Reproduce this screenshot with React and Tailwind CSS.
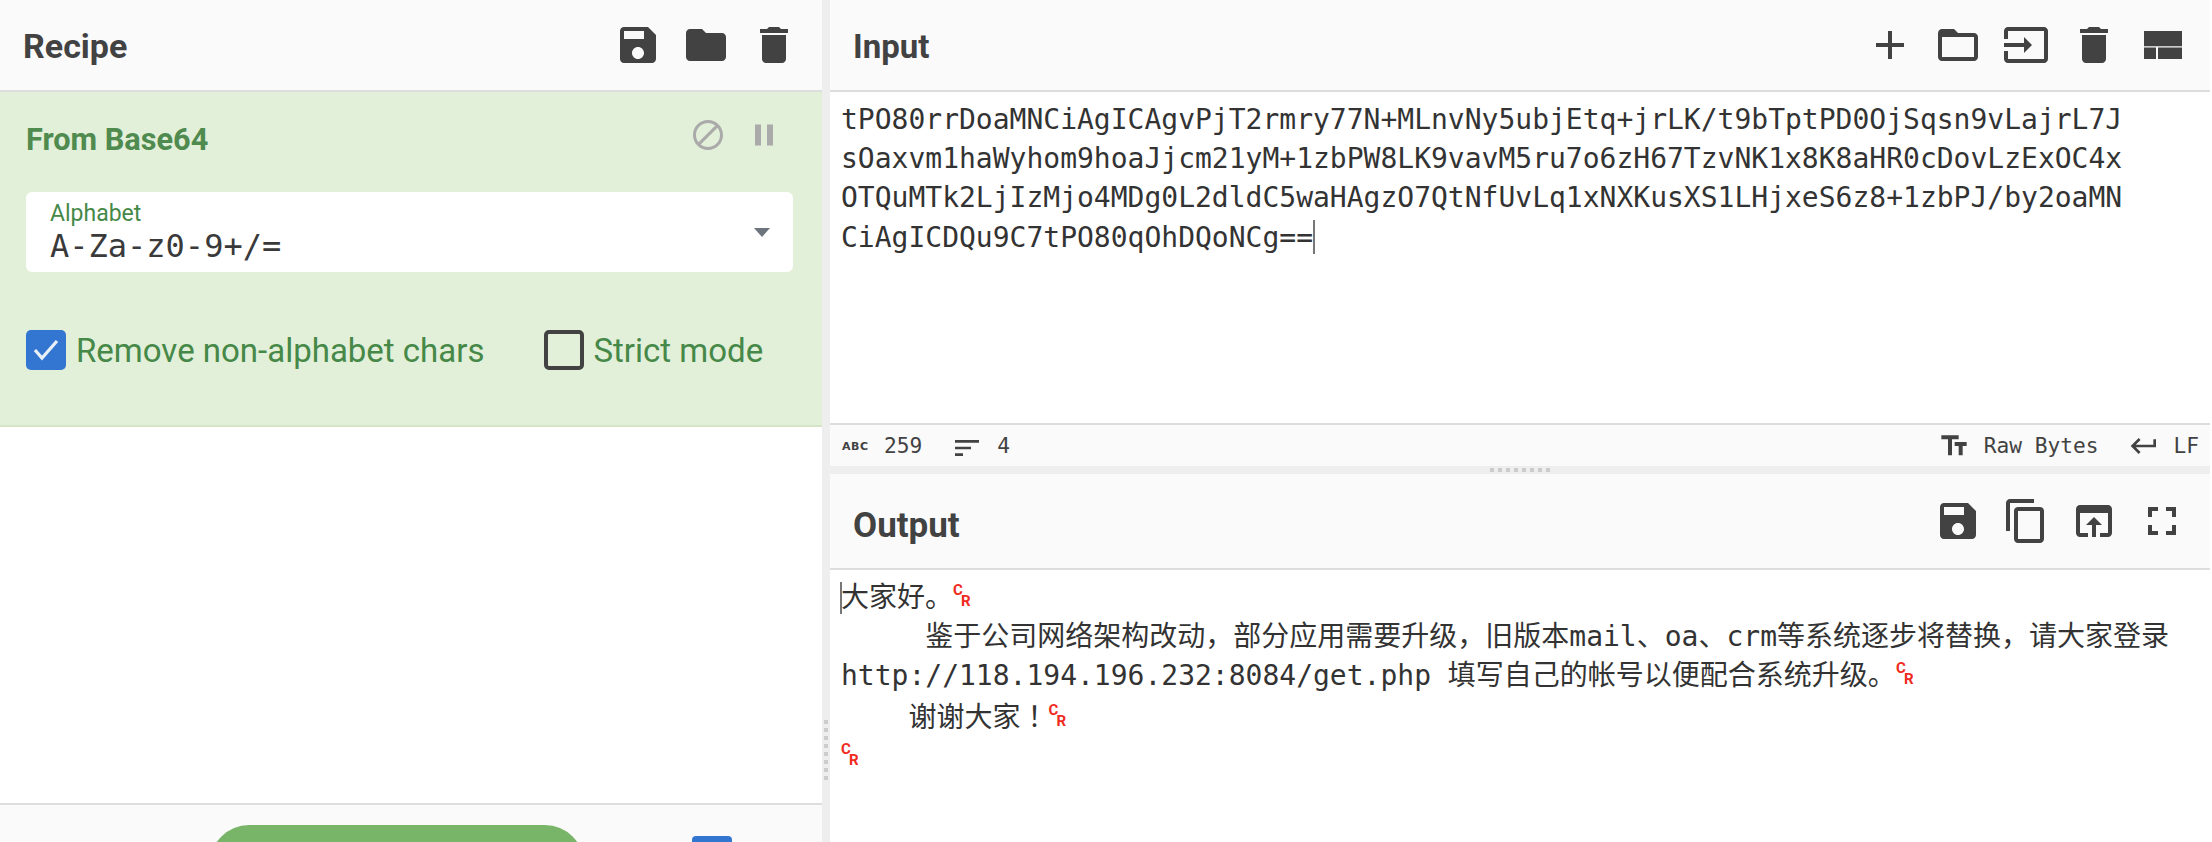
const P = {
  save: "M17 3H5c-1.11 0-2 .9-2 2v14c0 1.1.89 2 2 2h14c1.1 0 2-.9 2-2V7l-4-4zm-5 16c-1.66 0-3-1.34-3-3s1.34-3 3-3 3 1.34 3 3-1.34 3-3 3zm3-10H5V5h10v4z",
  folder: "M10 4H4c-1.1 0-1.99.9-1.99 2L2 18c0 1.1.9 2 2 2h16c1.1 0 2-.9 2-2V8c0-1.1-.9-2-2-2h-8l-2-2z",
  del: "M6 19c0 1.1.9 2 2 2h8c1.1 0 2-.9 2-2V7H6v12zM19 4h-3.5l-1-1h-5l-1 1H5v2h14V4z",
  add: "M19 13h-6v6h-2v-6H5v-2h6V5h2v6h6v2z",
  folderOpen: "M20 6h-8l-2-2H4c-1.1 0-1.99.9-1.99 2L2 18c0 1.1.9 2 2 2h16c1.1 0 2-.9 2-2V8c0-1.1-.9-2-2-2zm0 12H4V8h16v10z",
  input: "M21 3.01H3c-1.1 0-2 .9-2 2V9h2V4.99h18v14.03H3V15H1v4.01c0 1.1.9 1.98 2 1.98h18c1.1 0 2-.88 2-1.98v-14c0-1.11-.9-2-2-2zM11 16l4-4-4-4v3H1v2h10v3z",
  layout: "M3 5h19v7.6H3zM3 13.2h6V19H3zM10 13.2h12V19H10z",
  block: "M12 2C6.48 2 2 6.48 2 12s4.48 10 10 10 10-4.48 10-10S17.52 2 12 2zM4 12c0-4.42 3.58-8 8-8 1.85 0 3.55.63 4.9 1.69L5.69 16.9C4.63 15.55 4 13.85 4 12zm8 8c-1.85 0-3.55-.63-4.9-1.69L18.31 7.1C19.37 8.45 20 10.15 20 12c0 4.42-3.58 8-8 8z",
  pause: "M6 19h4V5H6v14zm8-14v14h4V5h-4z",
  copy: "M16 1H4c-1.1 0-2 .9-2 2v14h2V3h12V1zm3 4H8c-1.1 0-2 .9-2 2v14c0 1.1.9 2 2 2h11c1.1 0 2-.9 2-2V7c0-1.1-.9-2-2-2zm0 16H8V7h11v14z",
  open: "M19 4H5c-1.11 0-2 .9-2 2v12c0 1.1.89 2 2 2h4v-2H5V8h14v10h-4v2h4c1.1 0 2-.9 2-2V6c0-1.1-.89-2-2-2zm-7 6l-4 4h3v6h2v-6h3l-4-4z",
  full: "M7 14H5v5h5v-2H7v-3zm-2-4h2V7h3V5H5v5zm12 7h-3v2h5v-5h-2v3zM14 5v2h3v3h2V5h-5z",
  text: "M2.5 4v3h5v12h3V7h5V4h-13zm19 5h-9v3h3v7h3v-7h3V9z",
  ret: "M19 7v4H5.83l3.58-3.59L8 6l-6 6 6 6 1.41-1.41L5.83 13H21V7z",
  sort: "M3 18h6v-2H3v2zM3 6v2h18V6H3zm0 7h12v-2H3v2z",
};

function Icon({ d, size = 48, className = "" }) {
  return (
    <svg width={size} height={size} viewBox="0 0 24 24" fill="currentColor" className={"shrink-0 " + className}>
      <path d={d} />
    </svg>
  );
}

function Header({ title, icons, className = "", titleClass = "" }) {
  return (
    <div className={"flex items-center justify-between bg-[#fafafa] border-b-2 border-[#dddddd] pr-[24px] shrink-0 " + className}>
      <span className={"font-['Roboto',sans-serif] font-bold text-[#424242] relative " + titleClass}>{title}</span>
      <div className="flex gap-[20px] text-[#424242]">
        {icons.map((d, i) => (
          <Icon key={i} d={d} />
        ))}
      </div>
    </div>
  );
}

function CR() {
  return (
    <span className="inline-flex w-[17px] text-[15px] font-bold leading-none text-[#f02a1d] font-['Roboto',sans-serif] align-baseline">
      <span className="inline-block w-[8px] relative -top-[12px]">C</span>
      <span className="inline-block w-[9px] relative -top-[1px]">R</span>
    </span>
  );
}

const mono = "font-['DejaVu_Sans_Mono','Noto_Sans_CJK_SC',monospace] text-[28px] leading-[39.2px] text-[#333333] whitespace-pre";

export default function App() {
  return (
    <div className="flex w-[2212px] h-[842px] overflow-hidden bg-white">
      <div className="flex flex-col w-[822px] shrink-0">
        <Header title="Recipe" icons={[P.save, P.folder, P.del]} className="h-[92px] pl-[23px]" titleClass="text-[34px] top-[1px]" />
        <div className="h-[335px] shrink-0 bg-[#e2efd9] border-b-2 border-[#d5e6c8] pl-[26px] pr-[29px]">
          <div className="flex items-center justify-between h-[100px] pb-[14px]">
            <span className="font-['Roboto',sans-serif] font-bold text-[30.7px] text-[#4f8a4f] relative top-[5px]">From Base64</span>
            <div className="flex items-center gap-[20px] text-[#aaaaaa] pr-[11px]">
              <Icon d={P.block} size={36} />
              <Icon d={P.pause} size={36} />
            </div>
          </div>
          <div className="flex items-center justify-between h-[80px] w-[767px] bg-white rounded-[6px] pl-[24px] pr-[23px]">
            <div className="flex flex-col pt-[2px]">
              <span className="font-['Roboto',sans-serif] text-[23px] leading-[24px] text-[#468847]">Alphabet</span>
              <span className="font-['DejaVu_Sans_Mono',monospace] text-[32px] leading-[38px] text-[#3a3a3a] relative top-[1px]">A-Za-z0-9+/=</span>
            </div>
            <span className="w-0 h-0 border-x-[8px] border-t-[9px] border-x-transparent border-t-[#6c757d]" />
          </div>
          <div className="flex items-center mt-[58px] h-[40px]">
            <span className="flex items-center justify-center w-[40px] h-[40px] rounded-[5px] bg-[#3276d2]">
              <svg width="28" height="22" viewBox="0 0 28 22" fill="none" stroke="#e8f0fa" strokeWidth="3.2">
                <path d="M3 11l7 8L25 2" />
              </svg>
            </span>
            <span className="ml-[10px] font-['Roboto',sans-serif] text-[33px] text-[#468847] relative top-[1px]">Remove non-alphabet chars</span>
            <span className="ml-[60px] w-[40px] h-[40px] rounded-[5px] border-[4px] border-[#424242]" />
            <span className="ml-[9px] font-['Roboto',sans-serif] text-[33px] text-[#468847] relative top-[1px]">Strict mode</span>
          </div>
        </div>
        <div className="flex-1 bg-white" />
        <div className="h-[39px] shrink-0 bg-[#fafafa] border-t-2 border-[#dddddd] overflow-hidden pt-[20px] flex items-start">
          <div className="ml-[210px] w-[374px] h-[90px] bg-[#78b569] rounded-[39px] shrink-0" />
          <div className="ml-[108px] mt-[11px] w-[40px] h-[40px] bg-[#3276d2] rounded-[4px] shrink-0" />
        </div>
      </div>

      <div className="w-[8px] shrink-0 bg-[#eeeeee] flex flex-col items-center gap-[4px] pt-[720px]">
        {[0, 1, 2, 3, 4, 5, 6, 7].map((i) => (
          <span key={i} className="w-[4px] h-[4px] bg-[#cccccc] shrink-0" />
        ))}
      </div>

      <div className="flex flex-col w-[1380px] shrink-0">
        <Header title="Input" icons={[P.add, P.folderOpen, P.input, P.del, P.layout]} className="h-[92px] pl-[23px]" titleClass="text-[33px] top-[2px]" />
        <div className={"h-[331px] shrink-0 pl-[11px] pt-[8px] bg-white " + mono}>
          <div>tPO80rrDoaMNCiAgICAgvPjT2rmry77N+MLnvNy5ubjEtq+jrLK/t9bTptPD0OjSqsn9vLajrL7J</div>
          <div>sOaxvm1haWyhom9hoaJjcm21yM+1zbPW8LK9vavM5ru7o6zH67TzvNK1x8K8aHR0cDovLzExOC4x</div>
          <div>OTQuMTk2LjIzMjo4MDg0L2dldC5waHAgzO7QtNfUvLq1xNXKusXS1LHjxeS6z8+1zbPJ/by2oaMN</div>
          <div className="flex items-center">
            <span>CiAgICDQu9C7tPO80qOhDQoNCg==</span>
            <span className="w-[2px] h-[34px] bg-[#777777]" />
          </div>
        </div>
        <div className="h-[43px] shrink-0 flex items-center justify-between bg-[#fafafa] border-t-2 border-[#dddddd] pl-[12px] pr-[11px] font-['DejaVu_Sans_Mono',monospace] text-[21.2px] text-[#424242]">
          <div className="flex items-center">
            <span className="w-[26px] font-['DejaVu_Sans',sans-serif] font-bold text-[11px] tracking-[0.5px] relative top-[2px]">ABC</span>
            <span className="ml-[16px]">259</span>
            <Icon d={P.sort} size={32} className="ml-[29px] relative top-[2px]" />
            <span className="ml-[14px]">4</span>
          </div>
          <div className="flex items-center">
            <Icon d={P.text} size={32} />
            <span className="ml-[14px]">Raw Bytes</span>
            <Icon d={P.ret} size={32} className="ml-[30px]" />
            <span className="ml-[13px]">LF</span>
          </div>
        </div>
        <div className="h-[8px] shrink-0 bg-[#eeeeee] flex justify-center items-center gap-[4px]">
          {[0, 1, 2, 3, 4, 5, 6, 7].map((i) => (
            <span key={i} className="w-[4px] h-[4px] bg-[#cccccc]" />
          ))}
        </div>
        <Header title="Output" icons={[P.save, P.copy, P.open, P.full]} className="h-[96px] pl-[23px]" titleClass="text-[35px] top-[5px]" />
        <div className={"flex-1 pl-[11px] pt-[8px] bg-white " + mono}>
          <div className="flex items-center">
            <span className="w-[2px] h-[32px] bg-[#777777] -mr-[1px] -ml-[1px]" />
            <span>大家好。<CR /></span>
          </div>
          <div>     鉴于公司网络架构改动，部分应用需要升级，旧版本mail、oa、crm等系统逐步将替换，请大家登录</div>
          <div>http://118.194.196.232:8084/get.php 填写自己的帐号以便配合系统升级。<CR /></div>
          <div>    谢谢大家<span className="font-['Noto_Sans_CJK_TC',sans-serif]">！</span><CR /></div>
          <div><CR /></div>
        </div>
      </div>
      <div className="w-[2px] shrink-0 bg-white" />
    </div>
  );
}
